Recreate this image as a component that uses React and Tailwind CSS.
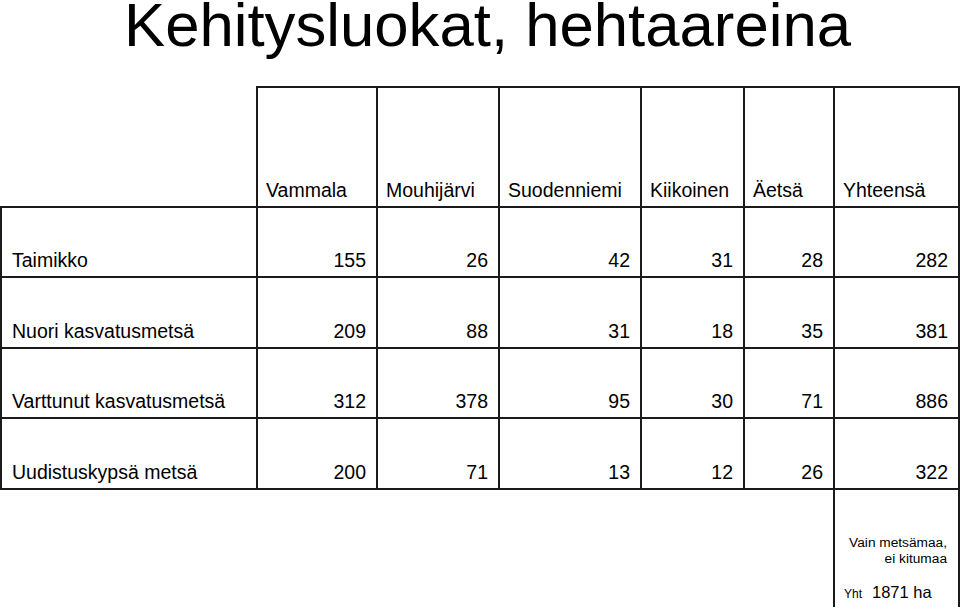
import React from "react";

const headers = ["Vammala", "Mouhijärvi", "Suodenniemi", "Kiikoinen", "Äetsä", "Yhteensä"];
const rows = [
  ["Taimikko", "155", "26", "42", "31", "28", "282"],
  ["Nuori kasvatusmetsä", "209", "88", "31", "18", "35", "381"],
  ["Varttunut kasvatusmetsä", "312", "378", "95", "30", "71", "886"],
  ["Uudistuskypsä metsä", "200", "71", "13", "12", "26", "322"],
];

export default function App() {
  return (
    <div className="w-[960px] h-[611px] overflow-hidden bg-white text-black font-['Liberation_Sans',Arial,sans-serif]">
      <div className="h-[86px] pl-[124px] pt-[1px]">
        <h1 className="text-[61.7px] leading-[48px] font-normal whitespace-nowrap">Kehitysluokat, hehtaareina</h1>
      </div>
      <div className="grid grid-cols-[256px_120px_122px_142px_103px_90px_127px] grid-rows-[120px_70px_71px_70px_73px_117px] text-[19.5px] leading-[22px]">
        <div />
        {headers.map((h, i) => (
          <div
            key={h}
            className={
              "flex items-end pb-[5px] pl-2 border-t-2 border-l-2 border-[#1a1a1a] whitespace-nowrap" +
              (i === headers.length - 1 ? " border-r-2" : "")
            }
          >
            {h}
          </div>
        ))}
        {rows.map((r, ri) =>
          r.map((c, ci) => (
            <div
              key={ri + "-" + ci}
              className={
                "flex items-end pb-[5px] border-t-2 border-l-2 border-[#1a1a1a] whitespace-nowrap" +
                (ci === 0 ? " pl-[10px] justify-start" : " pr-[10px] justify-end") +
                (ci === r.length - 1 ? " border-r-2" : "") +
                (ri === rows.length - 1 ? " border-b-2" : "")
              }
            >
              {c}
            </div>
          ))
        )}
        <div className="col-span-6" />
        <div className="flex flex-col border-l-2 border-r-2 border-[#1a1a1a] pt-[45px] pb-[3px]">
          <div className="text-right pr-[11px] text-[13.7px] leading-[16px]">
            <div>Vain metsämaa,</div>
            <div>ei kitumaa</div>
          </div>
          <div className="mt-auto flex items-baseline pl-[9px] leading-[20px]">
            <span className="text-[12px]">Yht</span>
            <span className="ml-[10px] text-[16.5px]">1871 ha</span>
          </div>
        </div>
      </div>
    </div>
  );
}
